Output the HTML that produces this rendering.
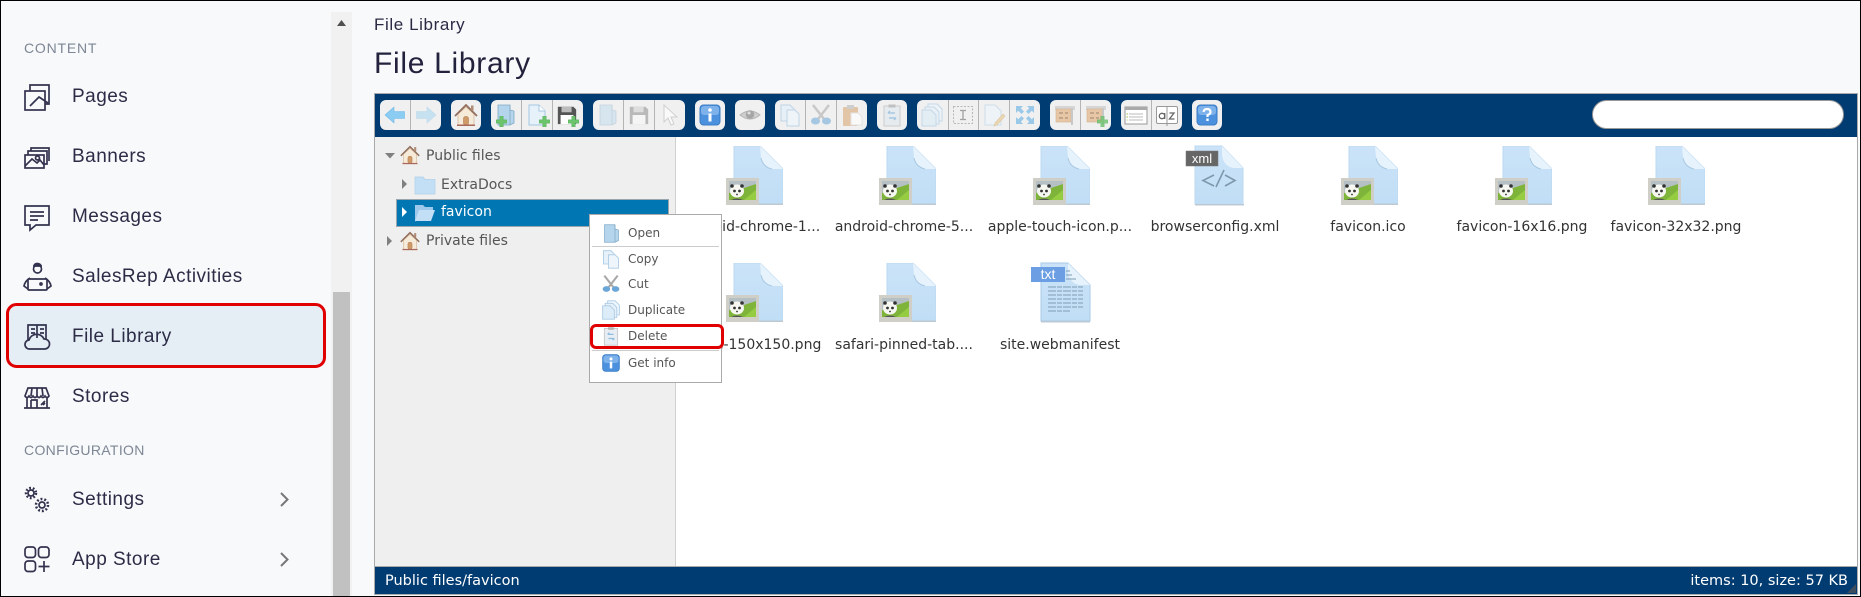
<!DOCTYPE html>
<html><head><meta charset="utf-8"><title>File Library</title>
<style>
html,body{margin:0;padding:0;width:1861px;height:597px;overflow:hidden;background:#f8f9fb}
.abs,.t,.s,.f,.l{position:absolute}
.t{white-space:nowrap;line-height:20px}
.s{left:72px;font:19px/24px "Liberation Sans",sans-serif;letter-spacing:.48px;color:#2c2c47;white-space:nowrap}
.h{left:24px;font:14px/18px "Liberation Sans",sans-serif;color:#7d8694;white-space:nowrap;position:absolute}
.f{font:14px/20px "DejaVu Sans",sans-serif;color:#333;white-space:nowrap;width:170px;text-align:center}
.l{font:12px/18px "DejaVu Sans",sans-serif;color:#555;white-space:nowrap;left:38px}
.tr{font:14px/20px "DejaVu Sans",sans-serif;color:#555;white-space:nowrap;position:absolute}
.st{font:14.500px/20px "DejaVu Sans",sans-serif;color:#fff;white-space:nowrap;position:absolute;top:571px}
</style></head><body>
<svg class="abs" style="left:0;top:0" width="1861" height="597" viewBox="0 0 1861 597" xmlns="http://www.w3.org/2000/svg">
<defs>
<linearGradient id="pg" x1="0" y1="0" x2="0" y2="1"><stop offset="0" stop-color="#cbe3f8"/><stop offset="1" stop-color="#c0def6"/></linearGradient>
<symbol id="fimg" viewBox="0 0 57 59">
<path d="M8 0H34L57 23V58H8Z" fill="url(#pg)" stroke="#bcd9f0"/>
<path d="M34 0L57 23H46Q37 21 35 12Z" fill="#e6f2fc"/><path d="M35 12Q37 21 46 23" stroke="#a8c8e2" fill="none"/>
<rect x="8" y="57.500" width="49" height="1.500" fill="#bcc9d3"/>
<rect x="0" y="32" width="33" height="27" fill="#cfcfc8"/>
<rect x="3" y="35" width="27" height="19" fill="#b4c0c4"/>
<path d="M3 54V47L30 38V54Z" fill="#7fb43a"/><path d="M18 54L30 44V54Z" fill="#96cc42"/>
<ellipse cx="11" cy="45" rx="7" ry="6.500" fill="#f7f7f2"/>
<circle cx="6" cy="40" r="1.800" fill="#333"/><circle cx="16" cy="40" r="1.800" fill="#333"/>
<circle cx="8.500" cy="45" r="1.400" fill="#333"/><circle cx="13.500" cy="45" r="1.400" fill="#333"/><circle cx="11" cy="48.500" r=".9" fill="#333"/>
<path d="M5 54Q11 51 17 54Z" fill="#555"/>
</symbol>
<symbol id="back" viewBox="0 0 24 24"><path d="M2 12L11 4V8.500H21.500V15.500H11V20Z" fill="#8accf2" stroke="#74b8e6" stroke-width=".6"/></symbol>
<symbol id="fwd" viewBox="0 0 24 24"><path d="M22 12L13 4V8.500H2.500V15.500H13V20Z" fill="#8accf2" stroke="#74b8e6" stroke-width=".6"/></symbol>
<symbol id="home" viewBox="0 0 24 24"><path d="M4 11V22H20V11L12 4Z" fill="#f6ead9" stroke="#d1b394" stroke-width=".7"/><path d="M1 13L12 2L23 13" fill="none" stroke="#93705e" stroke-width="1.800"/><rect x="17" y="2.500" width="2.500" height="5" fill="#b08c76"/><rect x="9.500" y="13.500" width="5" height="8.500" rx="2" fill="#d09a68" stroke="#a87044" stroke-width=".5"/><rect x="3" y="21.500" width="18" height="1.500" fill="#a8685a"/></symbol>
<symbol id="plus" viewBox="0 0 10 10"><path d="M3.500 0H6.500V3.500H10V6.500H6.500V10H3.500V6.500H0V3.500H3.500Z" fill="#6cc46c" stroke="#55ad5c" stroke-width=".5"/></symbol>
<symbol id="fold" viewBox="0 0 24 24"><path d="M4 2H16V7L20 8V20L16 22H4Z" fill="#b4d5ec" stroke="#7fa9c6" stroke-width=".8"/><path d="M16 2V22" stroke="#7fa9c6" stroke-width=".8"/></symbol>
<symbol id="file" viewBox="0 0 24 24"><path d="M4 2H14L20 8V22H4Z" fill="#e6f1fa" stroke="#a4c8e2"/><path d="M14 2V8H20" fill="#fff" stroke="#a4c8e2"/></symbol>
<symbol id="disk" viewBox="0 0 24 24"><path d="M2 3H19L22 6V22H2Z" fill="#555"/><rect x="6" y="3" width="11" height="6" fill="#bbb"/><rect x="5" y="12" width="14" height="10" fill="#fff"/></symbol>
<symbol id="cur" viewBox="0 0 24 24"><path d="M6 2V19L10 15L13 22L16 21L13 14H19Z" fill="#fff" stroke="#bbb"/></symbol>
<symbol id="info" viewBox="0 0 24 24"><rect x="2" y="2" width="20" height="20" rx="3.500" fill="#4b91de" stroke="#3b7cc5"/><rect x="3" y="3" width="18" height="9" rx="3" fill="#7db2ea"/><circle cx="12" cy="7" r="1.800" fill="#fff"/><rect x="10.500" y="10.500" width="3" height="8" fill="#fff"/></symbol>
<symbol id="help" viewBox="0 0 24 24"><rect x="2" y="2" width="20" height="20" rx="3.500" fill="#4b91de" stroke="#3b7cc5"/><rect x="3" y="3" width="18" height="9" rx="3" fill="#7db2ea"/><path d="M8.500 9Q9 6 12 6Q15.500 6 15.500 9Q15.500 11 12.500 12V14" fill="none" stroke="#fff" stroke-width="2.200"/><rect x="11.300" y="15.500" width="2.400" height="2.500" fill="#fff"/></symbol>
<symbol id="eye" viewBox="0 0 24 24"><path d="M2 12Q12 4 22 12Q12 20 2 12Z" fill="#c9c9c9" stroke="#aaa"/><circle cx="12" cy="11.500" r="4.200" fill="#9a9a9a"/><circle cx="11" cy="10" r="1.500" fill="#ddd"/></symbol>
<symbol id="copy" viewBox="0 0 24 24"><path d="M3 2H12L16 6V18H3Z" fill="#e6f1fa" stroke="#a9c9e3"/><path d="M9 7H17L21 11V23H9Z" fill="#eef6fc" stroke="#a9c9e3"/></symbol>
<symbol id="cut" viewBox="0 0 24 24"><path d="M4 2L15 16M20 2L9 16" stroke="#a8a8a8" stroke-width="2.500"/><ellipse cx="6.500" cy="18" rx="4.500" ry="3.500" fill="#6aa6d8"/><ellipse cx="17.500" cy="18" rx="4.500" ry="3.500" fill="#6aa6d8"/></symbol>
<symbol id="paste" viewBox="0 0 24 24"><rect x="3" y="4" width="15" height="19" rx="1" fill="#d9a877"/><rect x="7" y="2" width="7" height="4" fill="#b8b8b8"/><path d="M11 10H18L22 14V22H11Z" fill="#fff" stroke="#ddd"/></symbol>
<symbol id="del" viewBox="0 0 24 24"><rect x="4" y="3" width="16" height="20" fill="#dfe8ef" stroke="#b0b0b0"/><rect x="8.500" y="1.500" width="7" height="3" fill="#999"/><path d="M8 10H15M8 10L10 8M16 15H9M16 15L14 17" stroke="#6aa6d8" stroke-width="1.500" fill="none"/></symbol>
<symbol id="dup" viewBox="0 0 24 24"><path d="M8 1H17L22 6V18H8Z" fill="#eef6fc" stroke="#a9c9e3"/><path d="M5 4H14L19 9V21H5Z" fill="#e6f1fa" stroke="#a9c9e3"/><path d="M2 7H11L16 12V23H2Z" fill="#dcecf8" stroke="#a9c9e3"/></symbol>
<symbol id="ren" viewBox="0 0 24 24"><rect x="2.500" y="3.500" width="19" height="17" fill="none" stroke="#999" stroke-dasharray="2 1.500"/><path d="M9 7.500H15M12 7.500V16.500M9 16.500H15" stroke="#777" stroke-width="1.300"/></symbol>
<symbol id="edit" viewBox="0 0 24 24"><path d="M3 2H13L19 8V22H3Z" fill="#eef6fc" stroke="#b9d2e6"/><path d="M13 20L21 11L23 13L15 22L12 23Z" fill="#e8c88a" stroke="#c9a768" stroke-width=".6"/></symbol>
<symbol id="res" viewBox="0 0 24 24"><path d="M3 3H10L7.800 5.200L11 8.500L8.500 11L5.200 7.800L3 10ZM21 3V10L18.800 7.800L15.500 11L13 8.500L16.200 5.200L14 3ZM3 21V14L5.200 16.200L8.500 13L11 15.500L7.800 18.800L10 21ZM21 21H14L16.200 18.800L13 15.500L15.500 13L18.800 16.200L21 14Z" fill="#6db3e6"/></symbol>
<symbol id="arch" viewBox="0 0 24 24"><rect x="2" y="3" width="20" height="4" fill="#ccc"/><rect x="3" y="6" width="15" height="13" fill="#e3b98c" stroke="#c79b6c" stroke-width=".6"/><path d="M6 10H10M12 10H15M6 15H10M12 15H15" stroke="#7d6147"/><rect x="18" y="5" width="2" height="17" fill="#bbb"/></symbol>
<symbol id="view" viewBox="0 0 24 24"><rect x="1" y="4" width="22" height="17" fill="#fff" stroke="#999"/><rect x="1" y="4" width="22" height="3" fill="#aaa"/><path d="M5 11H19M5 14H19M5 17H19" stroke="#bbb"/><path d="M2.500 11H4M2.500 14H4" stroke="#9cba54"/><path d="M2.500 17H4" stroke="#dd9"/></symbol>
<symbol id="sort" viewBox="0 0 24 24"><rect x="1.500" y="3.500" width="21" height="17" rx="1.500" fill="#fff" stroke="#999"/><path d="M12 3.500V23" stroke="#999"/><circle cx="7" cy="13" r="2.700" fill="none" stroke="#666" stroke-width="1.300"/><path d="M9.700 10V16" stroke="#666" stroke-width="1.300"/><path d="M14.500 10H19L14.500 16H19.500" fill="none" stroke="#666" stroke-width="1.300"/></symbol>
</defs>

<rect width="1861" height="597" fill="#f8f9fb"/>
<rect x="331" y="12" width="21" height="585" fill="#f1f1f1"/>
<rect x="333" y="292" width="17" height="305" fill="#c1c1c1"/>
<path d="M341.500 20L346 26H337Z" fill="#505050"/>

<rect x="7.500" y="304.500" width="317" height="62" rx="9" fill="#e6eef5" stroke="#e00000" stroke-width="3"/>

<g fill="none" stroke="#33334f" stroke-width="1.700">
<path d="M30 91V85H49V104H45"/><rect x="25" y="91" width="20" height="19"/><path d="M30 106L39 97L48 103"/>
<rect x="25" y="155" width="19" height="13"/><path d="M28 155V151H47V164H44"/><path d="M31 151V148H49V161"/><path d="M25 166L32 159L37 163L40 160L44 165"/><circle cx="37.500" cy="158" r="2"/>
<path d="M25 206H49V225H36L30 230V225H25Z"/><path d="M30 212H44M30 216H44M30 220H38"/>
<circle cx="37.500" cy="269" r="4"/><path d="M33 266H42M34 265Q37 262 41 265"/><path d="M30 278Q25 281 24 286L28 289M45 278Q50 281 51 286L47 289"/><rect x="28" y="279" width="19" height="11" rx="1"/><circle cx="41" cy="284" r="1"/>
<path d="M28 341V325H37V338M37 325H46V340"/><path d="M31 329H35M31 333H35M40 329H44M40 333H44"/><path d="M30 349A4.500 4.500 0 0 1 29 340A8 8 0 0 1 44 339A5 5 0 0 1 45 349Z"/>
<path d="M28 388H46L49 396Q47 399 45 396Q43 399 41 396Q39 399 37 396Q35 399 33 396Q31 399 29 396Q27 399 25 396Z"/><path d="M32 388L31 396M37 388V396M42 388L43 396"/><path d="M27 398V408M47 398V408M24 408H50"/><path d="M31 400H37V408M31 400V408"/><path d="M41 405L45 401M43 405L45 403"/>
<circle cx="31" cy="493" r="3"/><circle cx="31" cy="493" r="5" stroke-width="2.500" stroke-dasharray="1.800 1.800"/>
<circle cx="42" cy="505" r="3"/><circle cx="42" cy="505" r="6" stroke-width="2.500" stroke-dasharray="1.900 1.900"/>
<rect x="25" y="547" width="10.500" height="10.500" rx="3"/><rect x="38.500" y="547" width="10.500" height="10.500" rx="3"/><rect x="25" y="561" width="10.500" height="10.500" rx="3"/><path d="M38.500 566.500H49.500M44 561V572"/>
</g>
<path d="M281 493L287.500 499.500L281 506M281 553L287.500 559.500L281 566" fill="none" stroke="#777" stroke-width="2"/>

<rect x="374.500" y="93.500" width="1483" height="501" fill="#fff" stroke="#aaa"/>
<rect x="375" y="94" width="1482" height="43" fill="#003c72"/>
<rect x="375" y="567" width="1482" height="27" fill="#003c72"/>
<rect x="375" y="137" width="300" height="429" fill="#efefef"/>
<rect x="675" y="137" width="1" height="429" fill="#d0d0d0"/>
<rect x="375" y="566" width="1482" height="1" fill="#aaa"/>
<path d="M1856 584V593H1847Z" fill="#3d4d5d"/>

<g fill="#f0f0f0">
<rect x="380" y="100" width="61" height="30" rx="6"/><rect x="451" y="100" width="30" height="30" rx="6"/><rect x="491" y="100" width="92" height="30" rx="6"/><rect x="593" y="100" width="92" height="30" rx="6"/><rect x="695" y="100" width="30" height="30" rx="6"/><rect x="735" y="100" width="30" height="30" rx="6"/><rect x="775" y="100" width="92" height="30" rx="6"/><rect x="877" y="100" width="30" height="30" rx="6"/><rect x="917" y="100" width="123" height="30" rx="6"/><rect x="1050" y="100" width="61" height="30" rx="6"/><rect x="1121" y="100" width="61" height="30" rx="6"/><rect x="1192" y="100" width="30" height="30" rx="6"/>
</g>
<g fill="#b4b4b4">
<rect x="410" y="100" width="1" height="30"/><rect x="521" y="100" width="1" height="30"/><rect x="552" y="100" width="1" height="30"/><rect x="623" y="100" width="1" height="30"/><rect x="654" y="100" width="1" height="30"/><rect x="805" y="100" width="1" height="30"/><rect x="836" y="100" width="1" height="30"/><rect x="948" y="100" width="1" height="30"/><rect x="978" y="100" width="1" height="30"/><rect x="1009" y="100" width="1" height="30"/><rect x="1080" y="100" width="1" height="30"/><rect x="1151" y="100" width="1" height="30"/>
</g>
<use href="#back" x="383" y="103" width="24" height="24"/>
<use href="#fwd" x="414" y="103" width="24" height="24" opacity=".4"/>
<use href="#home" x="454" y="103" width="24" height="24"/>
<use href="#fold" x="494" y="103" width="24" height="24"/><use href="#plus" x="496" y="116" width="11" height="11"/>
<use href="#file" x="525" y="103" width="24" height="24"/><use href="#plus" x="539" y="116" width="11" height="11"/>
<use href="#disk" x="556" y="104" width="22" height="22"/><use href="#plus" x="568" y="116" width="11" height="11"/>
<use href="#fold" x="596" y="103" width="24" height="24" opacity=".4"/>
<use href="#disk" x="628" y="104" width="22" height="22" opacity=".35"/>
<use href="#cur" x="658" y="103" width="24" height="24" opacity=".6"/>
<use href="#info" x="698" y="103" width="24" height="24"/>
<use href="#eye" x="738" y="103" width="24" height="24" opacity=".85"/>
<use href="#copy" x="778" y="103" width="24" height="24" opacity=".7"/>
<use href="#cut" x="809" y="103" width="24" height="24" opacity=".55"/>
<use href="#paste" x="840" y="103" width="24" height="24" opacity=".6"/>
<use href="#del" x="880" y="103" width="24" height="24" opacity=".55"/>
<use href="#dup" x="920" y="103" width="24" height="24" opacity=".6"/>
<use href="#ren" x="951" y="103" width="24" height="24" opacity=".65"/>
<use href="#edit" x="982" y="103" width="24" height="24" opacity=".6"/>
<use href="#res" x="1013" y="103" width="24" height="24" opacity=".65"/>
<use href="#arch" x="1053" y="103" width="24" height="24" opacity=".75"/>
<use href="#arch" x="1084" y="103" width="24" height="24" opacity=".75"/><use href="#plus" x="1097" y="116" width="11" height="11" opacity=".8"/>
<use href="#view" x="1124" y="103" width="24" height="24"/>
<use href="#sort" x="1155" y="103" width="24" height="24"/>
<use href="#help" x="1195" y="103" width="24" height="24"/>
<rect x="1592.500" y="100.500" width="251" height="28" rx="14" fill="#fff" stroke="#999"/>

<path d="M385 153H395L390 158.500Z" fill="#808080"/>
<path d="M402 179V189L407 184Z" fill="#808080"/>
<path d="M387 236V246L392 241Z" fill="#808080"/>
<use href="#home" x="400" y="145" width="20" height="20"/>
<use href="#home" x="400" y="231" width="20" height="20"/>
<path d="M415 177H423L425 179.500H435V194H415Z" fill="#c3dff6" stroke="#aecfe9" stroke-width=".7"/>
<rect x="396.500" y="199.500" width="272" height="27" fill="#0077b3" stroke="#9aa5ac"/>
<path d="M402 207V217L407 212Z" fill="#fff"/>
<path d="M415 205H423L425 207H433V210H421L415 222Z" fill="#9cc8ec"/><path d="M419 210H435L431 221H415Z" fill="#c3dff6"/>

<use href="#fimg" x="726" y="146" width="57" height="59"/>
<use href="#fimg" x="879" y="146" width="57" height="59"/>
<use href="#fimg" x="1033" y="146" width="57" height="59"/>
<use href="#fimg" x="1341" y="146" width="57" height="59"/>
<use href="#fimg" x="1495" y="146" width="57" height="59"/>
<use href="#fimg" x="1648" y="146" width="57" height="59"/>
<use href="#fimg" x="726" y="263" width="57" height="59"/>
<use href="#fimg" x="879" y="263" width="57" height="59"/>

<path d="M1195 146H1222L1243 168V204H1195Z" fill="url(#pg)" stroke="#bcd9f0"/>
<path d="M1222 146L1243 168H1233Q1224 166 1222 156Z" fill="#e6f2fc"/>
<rect x="1195" y="204" width="49" height="1.500" fill="#bcc9d3"/>
<rect x="1186" y="151" width="32" height="15" fill="#666" stroke="#777" stroke-width=".5"/>
<text x="1202" y="163" font-family="'Liberation Sans',sans-serif" font-size="13" fill="#fff" text-anchor="middle">xml</text>
<path d="M1214 175L1203 180.500L1214 186M1224 170L1216 187M1225 175L1235 180.500L1225 186" fill="none" stroke="#7e97ab" stroke-width="1.600"/>

<path d="M1041 263H1068L1090 285V321H1041Z" fill="url(#pg)" stroke="#a8cae6"/>
<path d="M1068 263L1090 285H1079Q1070 283 1068 273Z" fill="#e6f2fc"/>
<rect x="1041" y="321" width="49" height="1.500" fill="#bcc9d3"/>
<path d="M1048 287H1083M1048 291H1083M1048 295H1083M1048 299H1083M1048 303H1083M1048 307H1083M1048 311H1070" stroke="#7f9db6" stroke-width="1" stroke-dasharray="8 1 5 1"/>
<path d="M1066 271H1070M1066 275H1072M1066 279H1076" stroke="#7f9db6"/>
<rect x="1031" y="267" width="34" height="15" fill="#6c9ee3"/>
<text x="1048" y="279" font-family="'Liberation Sans',sans-serif" font-size="14" fill="#fff" text-anchor="middle">txt</text>
</svg>

<div class="t" style="left:374px;top:15px;font-family:'Liberation Sans',sans-serif;font-size:17px;letter-spacing:.6px;color:#2a2a45">File Library</div>
<div class="t" style="left:374px;top:44px;line-height:40px;font-family:'Liberation Sans',sans-serif;font-size:30px;letter-spacing:.7px;color:#22223c">File Library</div>

<div class="h" style="top:39px;letter-spacing:.8px">CONTENT</div>
<div class="s" style="top:85px">Pages</div>
<div class="s" style="top:145px">Banners</div>
<div class="s" style="top:205px">Messages</div>
<div class="s" style="top:265px">SalesRep Activities</div>
<div class="s" style="top:325px">File Library</div>
<div class="s" style="top:385px">Stores</div>
<div class="h" style="top:441px;letter-spacing:.33px">CONFIGURATION</div>
<div class="s" style="top:488px">Settings</div>
<div class="s" style="top:548px">App Store</div>

<div class="tr" style="left:426px;top:146px">Public files</div>
<div class="tr" style="left:441px;top:175px">ExtraDocs</div>
<div class="tr" style="left:441px;top:202px;color:#fff">favicon</div>
<div class="tr" style="left:426px;top:231px">Private files</div>

<div class="f" style="left:666px;top:217px">android-chrome-1...</div>
<div class="f" style="left:819px;top:217px">android-chrome-5...</div>
<div class="f" style="left:975px;top:217px">apple-touch-icon.p...</div>
<div class="f" style="left:1130px;top:217px">browserconfig.xml</div>
<div class="f" style="left:1283px;top:217px">favicon.ico</div>
<div class="f" style="left:1437px;top:217px">favicon-16x16.png</div>
<div class="f" style="left:1591px;top:217px">favicon-32x32.png</div>
<div class="f" style="left:666px;top:335px">mstile-150x150.png</div>
<div class="f" style="left:819px;top:335px">safari-pinned-tab....</div>
<div class="f" style="left:975px;top:335px">site.webmanifest</div>

<div class="st" style="left:385px">Public files/favicon</div>
<div class="st" style="right:13px">items: 10, size: 57 KB</div>

<div class="abs" style="left:589px;top:214px;width:131px;height:167px;background:#fff;border:1px solid #aaa">
<svg class="abs" style="left:0;top:0" width="131" height="167" viewBox="0 0 131 167">
<rect x="2" y="31" width="127" height="1" fill="#ccc"/>
<rect x="2" y="135" width="127" height="1" fill="#ccc"/>
<use href="#fold" x="11" y="8" width="21" height="21"/>
<use href="#copy" x="11" y="34" width="20" height="20"/>
<use href="#cut" x="11" y="59" width="20" height="20"/>
<use href="#dup" x="11" y="85" width="20" height="20"/>
<use href="#del" x="11" y="111" width="20" height="20" opacity=".75"/>
<use href="#info" x="11" y="138" width="20" height="20"/>
</svg>
<div class="l" style="top:9px">Open</div>
<div class="l" style="top:35px">Copy</div>
<div class="l" style="top:60px">Cut</div>
<div class="l" style="top:86px">Duplicate</div>
<div class="l" style="top:112px">Delete</div>
<div class="l" style="top:139px">Get info</div>
</div>
<div class="abs" style="left:590px;top:324px;width:128px;height:19px;border:3px solid #e00000;border-radius:6px"></div>

<svg class="abs" style="left:0;top:0;pointer-events:none" width="1861" height="597" viewBox="0 0 1861 597">
<path d="M.5 597V.5H1860.500V596.500H0" fill="none" stroke="#000"/>
</svg>
</body></html>
